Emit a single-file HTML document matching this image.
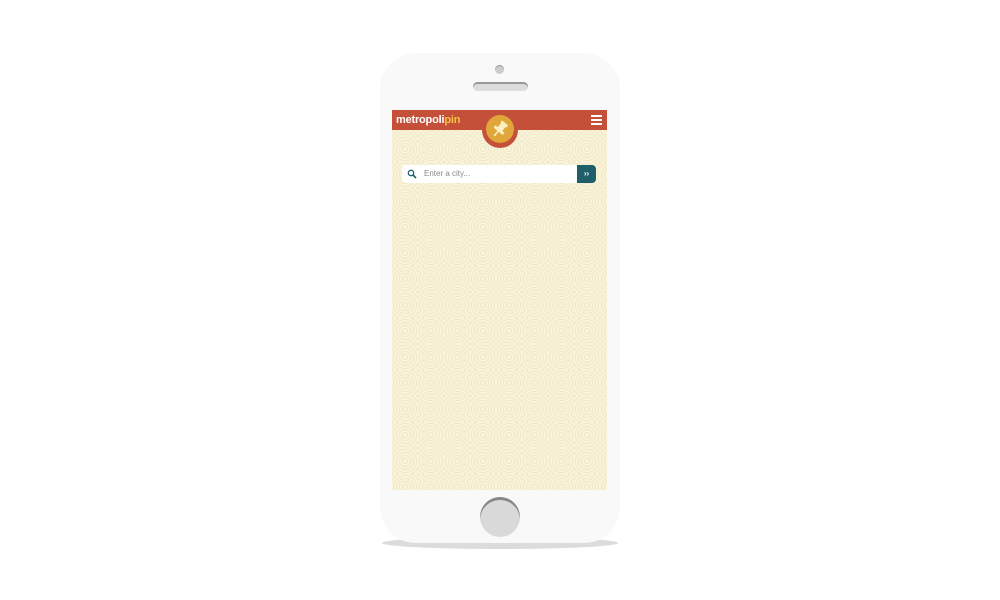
<!DOCTYPE html>
<html><head><style>
body{margin:0;width:1000px;height:600px;background:#fff;position:relative;overflow:hidden;font-family:"Liberation Sans",sans-serif}
.shadow{position:absolute;left:382px;top:537px;width:236px;height:12px;border-radius:50%;background:#dcdcdc}
.phone{position:absolute;left:380px;top:53px;width:240px;height:490px;border-radius:36px;background:#f9f9f9}
.cam{position:absolute;left:495px;top:65px;width:9px;height:9px;border-radius:50%;background:#ccc;box-shadow:inset 0 1px 0 #999}
.spk{position:absolute;left:473px;top:82px;width:55px;height:9px;border-radius:5px;background:#dcdcdc;box-shadow:inset 0 2px 0 #999}
.home{position:absolute;left:480px;top:497px;width:40px;height:40px;border-radius:50%;background:#d9d9d9;box-shadow:inset 0 3px 0 #888}
.screen{position:absolute;left:392px;top:110px;width:215px;height:380px;overflow:hidden;background-color:#f8f3da;
background-image:repeating-radial-gradient(circle at 50% 50%,#f8f3da 0 2px,#f0e8c4 2px 3px);background-size:26px 26px}
.hdr{position:absolute;left:0;top:0;width:215px;height:20px;background:#c4503a}
.logo{position:absolute;left:4px;top:4px;font-size:11px;font-weight:bold;color:#fff;letter-spacing:-0.2px}
.logo span{color:#f6c341}
.burg{position:absolute;right:5px;top:5px;width:11px}
.burg i{display:block;height:2px;background:#fff;margin-bottom:2px}
.pin{position:absolute;left:90px;top:2px;width:36px;height:36px;border-radius:50%;background:#c4503a}
.pin div{position:absolute;left:4px;top:3px;width:28px;height:28px;border-radius:50%;background:#e1a63a}
.search{position:absolute;left:10px;top:55px;width:194px;height:18px;background:#fff;border-radius:4px}
.search .t{position:absolute;left:22px;top:4px;font-size:8px;color:#888}
.go{position:absolute;right:0;top:0;width:19px;height:18px;background:#1f5f6a;border-radius:0 4px 4px 0;color:#fff;font-size:8px;text-align:center;line-height:18px;font-weight:bold}
</style></head><body>
<div class="shadow"></div>
<div class="phone"></div>
<div class="cam"></div><div class="spk"></div><div class="home"></div>
<div class="screen">
 <div class="hdr"><div class="logo">metropoli<span>pin</span></div>
 <div class="burg"><i></i><i></i><i></i></div></div>
 <div class="pin"><div><svg width="28" height="28" viewBox="0 0 28 28"><g fill="#fbeec0" transform="rotate(40 14 14)"><rect x="10" y="6" width="8" height="3" rx="1"/><rect x="11" y="8" width="6" height="7"/><rect x="8" y="14" width="12" height="3" rx="1"/><rect x="13.2" y="16" width="1.6" height="7"/></g></svg></div></div>
 <div class="search">
  <svg style="position:absolute;left:5px;top:4px" width="10" height="10" viewBox="0 0 10 10"><circle cx="4" cy="4" r="2.7" fill="none" stroke="#1f5f6a" stroke-width="1.3"/><line x1="6" y1="6" x2="9" y2="9" stroke="#1f5f6a" stroke-width="1.6"/></svg>
  <div class="t">Enter a city...</div><div class="go">››</div></div>
</div>
</body></html>
